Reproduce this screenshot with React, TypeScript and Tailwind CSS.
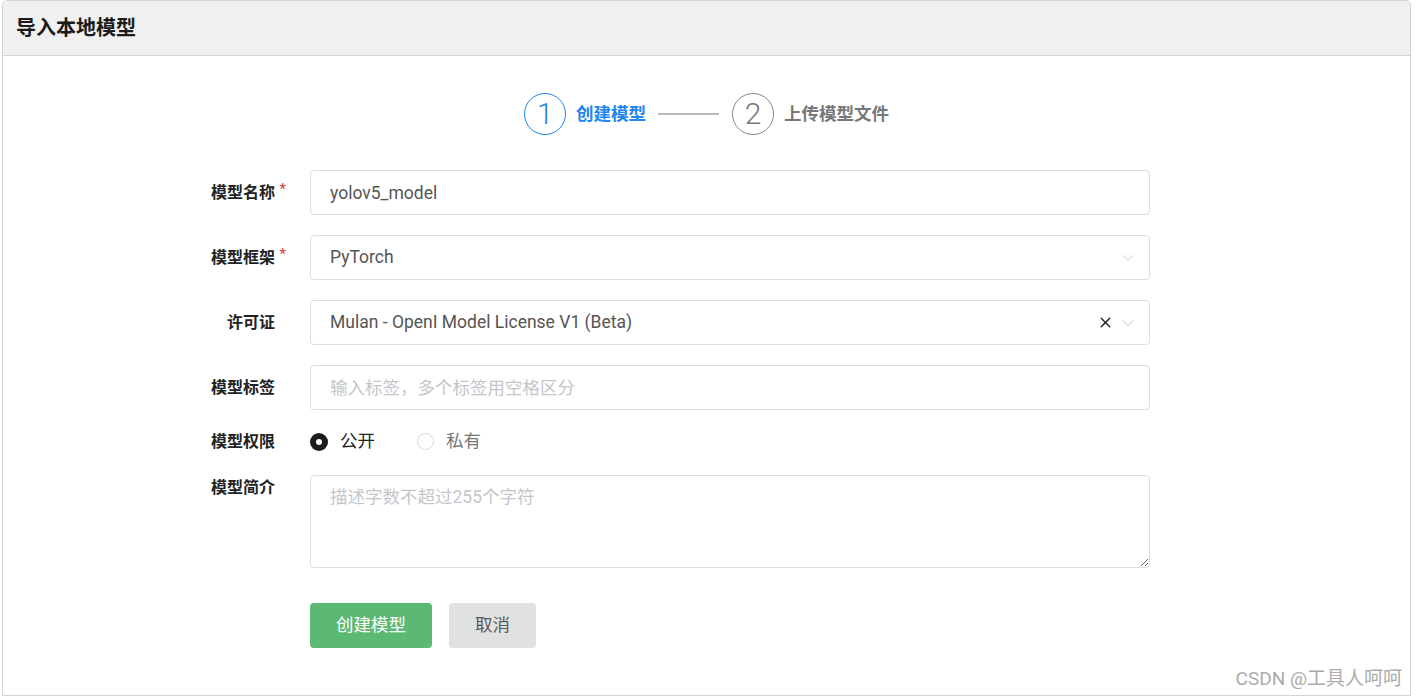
import { ChevronDown, X } from 'lucide-react'

const FONT = 'font-["Roboto","Noto_Sans_CJK_SC",sans-serif]'

function Label({ text, required }: { text: string; required?: boolean }) {
  return (
    <div className="w-[272px] shrink-0 text-right text-[16px] font-bold text-[#222]">
      <span className="relative">
        {text}
        {required && <span className="absolute -right-[11px] -top-[5px] text-[15px] font-normal text-[#e0383e]">*</span>}
      </span>
    </div>
  )
}

function StepCircle({ n, active }: { n: number; active?: boolean }) {
  return (
    <div
      className={
        active
          ? 'w-[42px] h-[42px] rounded-full border border-[#2185f0] text-[#2185f0] flex items-center justify-center text-[30px] font-light leading-none'
          : 'w-[42px] h-[42px] rounded-full border border-[#888] text-[#777] flex items-center justify-center text-[30px] font-light leading-none'
      }
    >
      {n}
    </div>
  )
}

export default function App() {
  return (
    <div className={`${FONT} min-h-screen bg-white pl-[2px]`}>
      <div className="relative w-[1409px] h-[696px] border border-[#d4d4d5] rounded-t-[5px] bg-white overflow-hidden">
        {/* Header */}
        <div className="h-[55px] bg-[#f0f0f0] border-b border-[#d4d4d5] flex items-center px-[13px]">
          <h1 className="text-[20px] font-bold text-[#1b1b1b]">导入本地模型</h1>
        </div>

        {/* Steps */}
        <div className="pt-[37px] flex items-center justify-center">
          <div className="flex items-center">
            <StepCircle n={1} active />
            <span className="ml-[10px] text-[17.5px] font-bold text-[#2185f0]">创建模型</span>
            <div className="ml-[12px] w-[61px] h-[2px] bg-[#b9b9b9]" />
            <div className="ml-[13px]"><StepCircle n={2} /></div>
            <span className="ml-[10px] text-[17.5px] font-bold text-[#777]">上传模型文件</span>
          </div>
        </div>

        {/* Form */}
        <div className="mt-[35px] flex flex-col">
          <div className="flex items-center">
            <Label text="模型名称" required />
            <input
              defaultValue="yolov5_model"
              className="ml-[35px] w-[840px] h-[45px] border border-[#dcdde0] rounded-[4px] px-[19px] text-[17.5px] text-[#555] outline-none"
            />
          </div>

          <div className="mt-[20px] flex items-center">
            <Label text="模型框架" required />
            <div className="ml-[35px] w-[840px] h-[45px] border border-[#dcdde0] rounded-[4px] pl-[19px] pr-[11px] flex items-center justify-between text-[17.5px] text-[#555]">
              <span>PyTorch</span>
              <ChevronDown size={20} strokeWidth={1.1} className="text-[#bbbec4]" />
            </div>
          </div>

          <div className="mt-[20px] flex items-center">
            <Label text="许可证" />
            <div className="ml-[35px] w-[840px] h-[45px] border border-[#dcdde0] rounded-[4px] pl-[19px] pr-[11px] flex items-center justify-between text-[17.5px] text-[#555]">
              <span>Mulan - OpenI Model License V1 (Beta)</span>
              <div className="flex items-center gap-[4px]">
                <X size={17} strokeWidth={2} className="text-[#222]" />
                <ChevronDown size={20} strokeWidth={1.1} className="text-[#bbbec4]" />
              </div>
            </div>
          </div>

          <div className="mt-[20px] flex items-center">
            <Label text="模型标签" />
            <input
              placeholder="输入标签，多个标签用空格区分"
              className="ml-[35px] w-[840px] h-[45px] border border-[#dcdde0] rounded-[4px] px-[19px] text-[17.5px] text-[#555] placeholder-[#c4c6cb] outline-none"
            />
          </div>

          <div className="mt-[20px] h-[23px] flex items-center">
            <Label text="模型权限" />
            <div className="ml-[35px] flex items-center">
              <span className="w-[18px] h-[18px] rounded-full bg-[#1b1c1d] flex items-center justify-center">
                <span className="w-[6px] h-[6px] rounded-full bg-white" />
              </span>
              <span className="ml-[12px] text-[17.5px] text-[#222]">公开</span>
              <span className="ml-[42px] w-[17px] h-[17px] rounded-full border border-[#d7d8db] bg-white" />
              <span className="ml-[12px] text-[17.5px] text-[#777]">私有</span>
            </div>
          </div>

          <div className="mt-[22px] flex items-start">
            <div className="pt-[1px]">
              <Label text="模型简介" />
            </div>
            <textarea
              placeholder="描述字数不超过255个字符"
              className="ml-[35px] w-[840px] h-[93px] border border-[#dcdde0] rounded-[4px] px-[19px] py-[8px] text-[17.5px] text-[#555] placeholder-[#c4c6cb] outline-none"
            />
          </div>

          <div className="mt-[35px] pl-[307px] flex items-center gap-[17px]">
            <button className="w-[122px] h-[45px] rounded-[4px] bg-[#5bb974] text-white text-[17.5px]">创建模型</button>
            <button className="w-[87px] h-[45px] rounded-[4px] bg-[#e0e1e2] text-[#5a5a5a] text-[17.5px]">取消</button>
          </div>
        </div>

        <span className="absolute right-[8px] bottom-[2px] text-[19px] text-[#ababab]">CSDN @工具人呵呵</span>
      </div>
    </div>
  )
}
